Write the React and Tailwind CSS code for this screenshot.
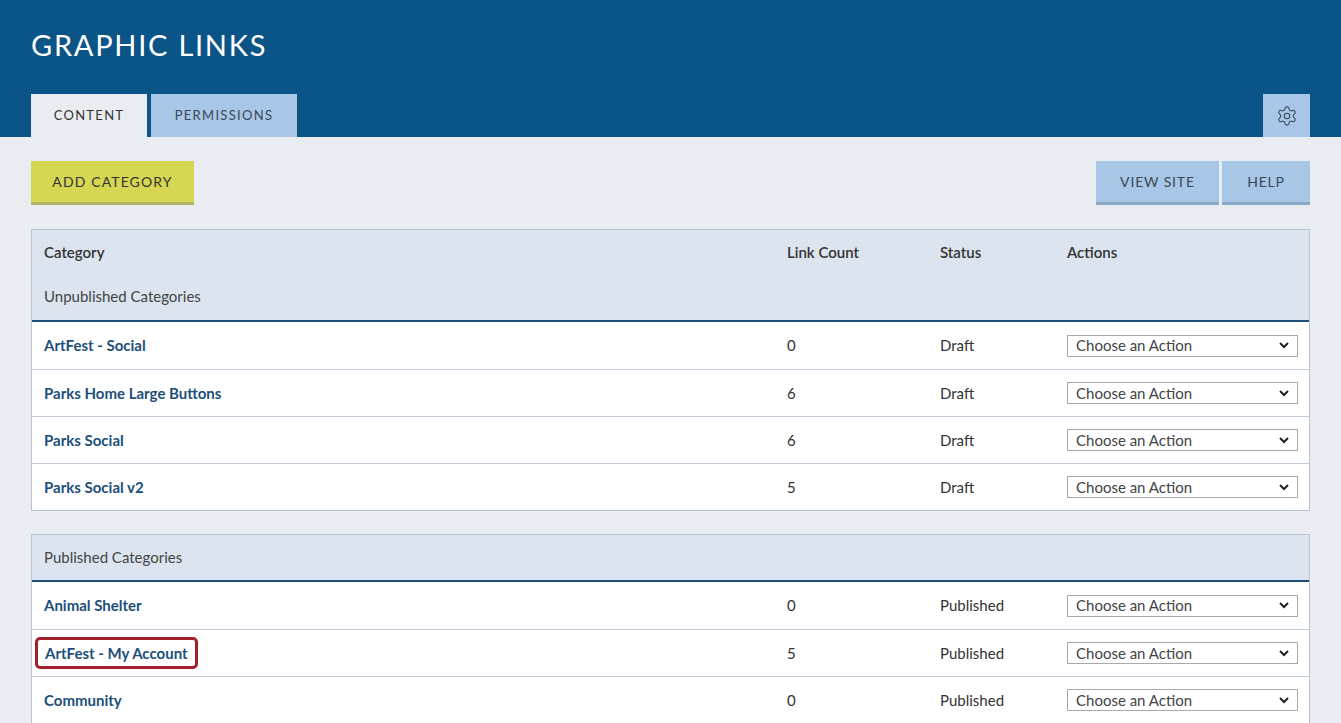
import React from "react";

const unpublished = [
  { name: "ArtFest - Social", count: 0, status: "Draft" },
  { name: "Parks Home Large Buttons", count: 6, status: "Draft" },
  { name: "Parks Social", count: 6, status: "Draft" },
  { name: "Parks Social v2", count: 5, status: "Draft" },
];

const published = [
  { name: "Animal Shelter", count: 0, status: "Published" },
  { name: "ArtFest - My Account", count: 5, status: "Published", highlight: true },
  { name: "Community", count: 0, status: "Published" },
];

const Gear = () => (
  <svg width="22" height="22" viewBox="0 0 24 24" fill="none" stroke="#3b4a5a" strokeWidth="1.2">
    <path d="M12.22 2h-.44a2 2 0 0 0-2 2v.18a2 2 0 0 1-1 1.73l-.43.25a2 2 0 0 1-2 0l-.15-.08a2 2 0 0 0-2.73.73l-.22.38a2 2 0 0 0 .73 2.73l.15.1a2 2 0 0 1 1 1.72v.51a2 2 0 0 1-1 1.74l-.15.09a2 2 0 0 0-.73 2.73l.22.38a2 2 0 0 0 2.73.73l.15-.08a2 2 0 0 1 2 0l.43.25a2 2 0 0 1 1 1.73V20a2 2 0 0 0 2 2h.44a2 2 0 0 0 2-2v-.18a2 2 0 0 1 1-1.73l.43-.25a2 2 0 0 1 2 0l.15.08a2 2 0 0 0 2.73-.73l.22-.39a2 2 0 0 0-.73-2.730l-.15-.08a2 2 0 0 1-1-1.74v-.5a2 2 0 0 1 1-1.74l.15-.09a2 2 0 0 0 .73-2.73l-.22-.38a2 2 0 0 0-2.73-.73l-.15.08a2 2 0 0 1-2 0l-.43-.25a2 2 0 0 1-1-1.73V4a2 2 0 0 0-2-2z" />
    <circle cx="12" cy="12" r="3" />
  </svg>
);

const Row = ({ row, first }) => (
  <div className={`flex items-center h-[47px] bg-white text-[15px] ${first ? "" : "border-t border-[#c3ccd8]"}`}>
    <div className="w-[755px] pl-[12px]">
      <span
        className={
          row.highlight
            ? "font-bold text-[#1d4f7a] px-[7px] py-[4px] -ml-[9px] border-[3px] border-[#a1222c] rounded-[5px]"
            : "font-bold text-[#1d4f7a]"
        }
      >
        {row.name}
      </span>
    </div>
    <div className="w-[153px] text-[#333]">{row.count}</div>
    <div className="w-[127px] text-[#333]">{row.status}</div>
    <div>
      <div className="w-[231px] h-[22px] border border-[#a9a9a9] bg-white flex items-center justify-between px-[8px] text-[#444]">
        <span>Choose an Action</span>
        <svg width="10" height="7" viewBox="0 0 10 7">
          <path d="M1 1l4 4 4-4" fill="none" stroke="#222" strokeWidth="2" />
        </svg>
      </div>
    </div>
  </div>
);

export default function App() {
  return (
    <div className="min-h-[723px] bg-[#e9edf2]" style={{ fontFamily: "Lato, 'Noto Sans', sans-serif" }}>
      <div className="bg-[#0b5487] h-[137px] px-[31px] flex flex-col">
        <h1 className="text-white text-[29px] tracking-[0.06em] pt-[26px] leading-[38px]">GRAPHIC LINKS</h1>
        <div className="mt-auto flex items-end">
          <div className="w-[116px] h-[43px] bg-[#e9edf2] flex items-center justify-center text-[13px] tracking-[0.1em] text-[#333]">CONTENT</div>
          <div className="ml-[4px] w-[146px] h-[43px] bg-[#a8c7e6] flex items-center justify-center text-[13px] tracking-[0.1em] text-[#3b4656]">PERMISSIONS</div>
          <div className="ml-auto w-[47px] h-[43px] bg-[#a8c7e6] flex items-center justify-center"><Gear /></div>
        </div>
      </div>
      <div className="px-[31px] pt-[24px]">
        <div className="flex justify-between">
          <div className="w-[163px] h-[44px] bg-[#d5d652] border-b-[3px] border-[#b3b563] flex items-center justify-center text-[14px] tracking-[0.08em] text-[#333]">ADD CATEGORY</div>
          <div className="flex gap-[3px]">
            <div className="w-[123px] h-[44px] bg-[#a8c7e6] border-b-[3px] border-[#8ea9c6] flex items-center justify-center text-[14px] tracking-[0.06em] text-[#3b4656]">VIEW SITE</div>
            <div className="w-[88px] h-[44px] bg-[#a8c7e6] border-b-[3px] border-[#8ea9c6] flex items-center justify-center text-[14px] tracking-[0.06em] text-[#3b4656]">HELP</div>
          </div>
        </div>
        <div className="mt-[24px] border border-[#b8c3d0]">
          <div className="bg-[#dbe4ef] h-[92px] border-b-2 border-[#1d4f7a] text-[15px] text-[#333]">
            <div className="flex items-center h-[44px] pl-[12px] font-semibold">
              <div className="w-[743px]">Category</div>
              <div className="w-[153px]">Link Count</div>
              <div className="w-[127px]">Status</div>
              <div>Actions</div>
            </div>
            <div className="pl-[12px] text-[#444] leading-[20px] pt-[12px]">Unpublished Categories</div>
          </div>
          {unpublished.map((r, i) => <Row key={r.name} row={r} first={i === 0} />)}
        </div>
        <div className="mt-[23px] border border-[#b8c3d0] border-b-0">
          <div className="bg-[#dbe4ef] h-[47px] border-b-2 border-[#1d4f7a] flex items-center pl-[12px] text-[15px] text-[#444]">Published Categories</div>
          {published.map((r, i) => <Row key={r.name} row={r} first={i === 0} />)}
          <div className="h-[20px] bg-white border-t border-[#c3ccd8]" />
        </div>
      </div>
    </div>
  );
}
